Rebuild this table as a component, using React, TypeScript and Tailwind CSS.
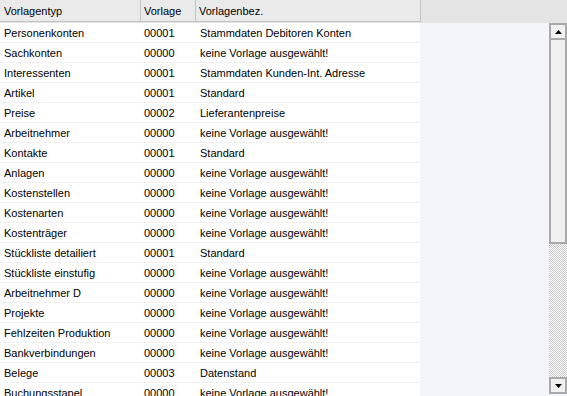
import React from "react";

type Row = { typ: string; nr: string; bez: string };

const rows: Row[] = [
  { typ: "Personenkonten", nr: "00001", bez: "Stammdaten Debitoren Konten" },
  { typ: "Sachkonten", nr: "00000", bez: "keine Vorlage ausgewählt!" },
  { typ: "Interessenten", nr: "00001", bez: "Stammdaten Kunden-Int. Adresse" },
  { typ: "Artikel", nr: "00001", bez: "Standard" },
  { typ: "Preise", nr: "00002", bez: "Lieferantenpreise" },
  { typ: "Arbeitnehmer", nr: "00000", bez: "keine Vorlage ausgewählt!" },
  { typ: "Kontakte", nr: "00001", bez: "Standard" },
  { typ: "Anlagen", nr: "00000", bez: "keine Vorlage ausgewählt!" },
  { typ: "Kostenstellen", nr: "00000", bez: "keine Vorlage ausgewählt!" },
  { typ: "Kostenarten", nr: "00000", bez: "keine Vorlage ausgewählt!" },
  { typ: "Kostenträger", nr: "00000", bez: "keine Vorlage ausgewählt!" },
  { typ: "Stückliste detailiert", nr: "00001", bez: "Standard" },
  { typ: "Stückliste einstufig", nr: "00000", bez: "keine Vorlage ausgewählt!" },
  { typ: "Arbeitnehmer D", nr: "00000", bez: "keine Vorlage ausgewählt!" },
  { typ: "Projekte", nr: "00000", bez: "keine Vorlage ausgewählt!" },
  { typ: "Fehlzeiten Produktion", nr: "00000", bez: "keine Vorlage ausgewählt!" },
  { typ: "Bankverbindungen", nr: "00000", bez: "keine Vorlage ausgewählt!" },
  { typ: "Belege", nr: "00003", bez: "Datenstand" },
  { typ: "Buchungsstapel", nr: "00000", bez: "keine Vorlage ausgewählt!" },
];

function Arrow({ up }: { up?: boolean }) {
  return (
    <svg width="7" height="4" viewBox="0 0 7 4">
      {up ? <polygon points="0,4 7,4 3.5,0" fill="#000" /> : <polygon points="0,0 7,0 3.5,4" fill="#000" />}
    </svg>
  );
}

export default function App() {
  return (
    <div
      className="w-[567px] h-[396px] overflow-hidden flex flex-col bg-[#f4f5fb] text-[11px] text-black"
      style={{ fontFamily: '"Liberation Sans", Arial, sans-serif' }}
    >
      {/* column header */}
      <div className="h-[23px] shrink-0 flex bg-[#e4e4e4]">
        <div className="flex h-[22px] w-[421px] border-b border-[#c2c2c2] bg-[#eaeaea]">
          <div className="w-[141px] border-r border-[#c2c2c2] pl-[4px] leading-[22px]">Vorlagentyp</div>
          <div className="w-[55px] border-r border-[#c2c2c2] pl-[3px] leading-[22px]">Vorlage</div>
          <div className="w-[225px] border-r border-[#c2c2c2] pl-[3px] leading-[22px]">Vorlagenbez.</div>
        </div>
      </div>

      <div className="flex flex-1 min-h-0">
        {/* rows */}
        <div className="flex-1 min-w-0 overflow-hidden">
          {rows.map((r) => (
            <div key={r.typ} className="flex h-[20px] w-[420px] bg-white border-b border-[#f0f0f0] pt-[1px] leading-[19px]">
              <div className="w-[141px] pl-[4px] whitespace-nowrap">{r.typ}</div>
              <div className="w-[55px] pl-[3px]">{r.nr}</div>
              <div className="flex-1 pl-[4px] whitespace-nowrap">{r.bez}</div>
            </div>
          ))}
        </div>

        {/* vertical scrollbar */}
        <div className="w-[18px] shrink-0 flex flex-col pb-[2px]">
          <div className="h-[17px] shrink-0 border-2 border-[#a9a9a9] bg-[#f0f0f0] flex items-center justify-center">
            <Arrow up />
          </div>
          <div className="h-[204px] shrink-0 border-2 border-t-0 border-[#a9a9a9] bg-[#f0f0f0]" />
          <div className="flex-1 bg-[repeating-conic-gradient(#c9c9c9_0_25%,#ffffff_0_50%)] bg-[length:2px_2px]" />
          <div className="h-[17px] shrink-0 border-2 border-[#a9a9a9] bg-[#f0f0f0] flex items-center justify-center">
            <Arrow />
          </div>
        </div>
      </div>
    </div>
  );
}
